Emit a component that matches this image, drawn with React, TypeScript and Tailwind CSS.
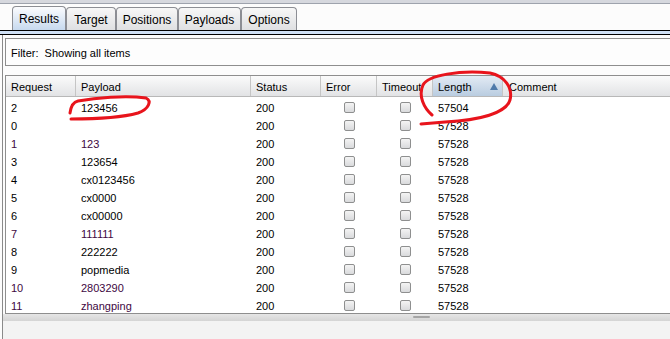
import React from "react";

const tabs = [
  { label: "Results", w: "w-[54px]", active: true },
  { label: "Target", w: "w-[50px]" },
  { label: "Positions", w: "w-[62px]" },
  { label: "Payloads", w: "w-[63px]" },
  { label: "Options", w: "w-[56px]" },
];

const rows: { req: string; payload: string; len: string; visited?: boolean }[] = [
  { req: "2", payload: "123456", len: "57504" },
  { req: "0", payload: "", len: "57528" },
  { req: "1", payload: "123", len: "57528", visited: true },
  { req: "3", payload: "123654", len: "57528" },
  { req: "4", payload: "cx0123456", len: "57528" },
  { req: "5", payload: "cx0000", len: "57528" },
  { req: "6", payload: "cx00000", len: "57528" },
  { req: "7", payload: "111111", len: "57528", visited: true },
  { req: "8", payload: "222222", len: "57528" },
  { req: "9", payload: "popmedia", len: "57528" },
  { req: "10", payload: "2803290", len: "57528", visited: true },
  { req: "11", payload: "zhangping", len: "57528", visited: true },
];

function Checkbox() {
  return (
    <div className="h-[11px] w-[11px] rounded-[2px] border border-[#8e8f8f] bg-gradient-to-b from-[#f4f4f4] to-[#d9dadc]" />
  );
}

function HeaderCell({ children, w, active }: { children?: React.ReactNode; w: string; active?: boolean }) {
  return (
    <div
      className={`${w} flex h-full shrink-0 items-center border-r border-[#c5c5c5] pl-[5px] pt-[2px] ${
        active ? "bg-gradient-to-b from-[#e3ebf4] to-[#b9cce0]" : ""
      }`}
    >
      {children}
    </div>
  );
}

export default function App() {
  return (
    <div className="relative h-[339px] w-[670px] overflow-hidden bg-[#fcfcfc] font-['Liberation_Sans',Arial,sans-serif] text-[11px] text-black">
      {/* top strip */}
      <div className="h-[4px] border-b border-[#9ea3ad] bg-[#d6d8de]" />

      {/* tabs */}
      <div className="flex h-[26px] items-end pl-[12px]">
        {tabs.map((t) => (
          <div
            key={t.label}
            className={`${t.w} flex items-center justify-center rounded-t-[4px] border border-b-0 border-[#8c8e94] pt-[1px] text-[12px] ${
              t.active
                ? "h-[24px] bg-gradient-to-b from-[#fbfcfe] to-[#c7d9ee]"
                : "h-[23px] bg-gradient-to-b from-[#f7f7f7] to-[#dfe0e2]"
            }`}
          >
            {t.label}
          </div>
        ))}
      </div>
      <div className="h-[5px] border-y border-black bg-[#cfe0f5]" />

      {/* main area */}
      <div className="ml-[2px] flex h-[304px] flex-col border-l border-[#8a8a8a]">
        <div className="pl-[2px] pt-[3px]">
          {/* filter bar */}
          <div className="flex h-[28px] items-center border border-r-0 border-[#8e8e8e] bg-[#fdfdfd] pl-[5px] pt-[2px]">
            Filter:&nbsp; Showing all items
          </div>

          {/* table */}
          <div className="mt-[9px] border border-r-0 border-[#8e8e8e] bg-white">
            <div className="flex h-[21px] border-b border-[#b8b8b8] bg-gradient-to-b from-[#fbfbfb] to-[#e2e3e5]">
              <HeaderCell w="w-[70px]">Request</HeaderCell>
              <HeaderCell w="w-[175px]">Payload</HeaderCell>
              <HeaderCell w="w-[70px]">Status</HeaderCell>
              <HeaderCell w="w-[56px]">Error</HeaderCell>
              <HeaderCell w="w-[56px]">Timeout</HeaderCell>
              <HeaderCell w="w-[70px]" active>
                <span className="flex-1">Length</span>
                <svg width="8" height="7" viewBox="0 0 8 7" className="mb-[2px] mr-[4px]">
                  <path d="M4 0 L8 7 L0 7 Z" fill="#4f7aaa" />
                </svg>
              </HeaderCell>
              <div className="flex h-full flex-1 items-center pl-[6px] pt-[2px]">Comment</div>
            </div>
            {rows.map((r) => (
              <div key={r.req} className="flex h-[18px] items-center">
                <div className={`w-[70px] shrink-0 pl-[5px] pt-[4px] ${r.visited ? "text-[#3e0842]" : ""}`}>{r.req}</div>
                <div className={`w-[175px] shrink-0 pl-[5px] pt-[4px] ${r.visited ? "text-[#3e0842]" : ""}`}>{r.payload}</div>
                <div className="w-[70px] shrink-0 pl-[5px] pt-[4px]">200</div>
                <div className="flex w-[56px] shrink-0 justify-center pt-[2px]">
                  <Checkbox />
                </div>
                <div className="flex w-[56px] shrink-0 justify-center pt-[2px]">
                  <Checkbox />
                </div>
                <div className="w-[70px] shrink-0 pl-[5px] pt-[4px]">{r.len}</div>
                <div className="flex-1" />
              </div>
            ))}
          </div>
        </div>

        {/* splitter */}
        <div className="flex h-[7px] justify-center bg-gradient-to-b from-[#e6e6e6] to-[#d4d4d4]">
          <div className="ml-[170px] mt-[2px] h-[2px] w-[17px] rounded-full bg-[#a5a5a5]" />
        </div>
        <div className="flex-1 bg-[#f3f3f3]" />
      </div>

      {/* red hand-drawn annotations */}
      <svg className="pointer-events-none absolute left-0 top-0" width="670" height="339">
        <path
          d="M70 113 C 71 106 73 102 78 101 C 95 98 125 95 146 98 C 152 101 149 109 138 113 C 120 118 95 119 71 119"
          fill="none"
          stroke="#e8141c"
          strokeWidth="3"
          strokeLinecap="round"
        />
        <path
          d="M432 115 C 424 108 418 96 423 85 C 428 75 460 70 490 73 C 505 76 513 88 510 100 C 506 113 480 120 445 122 L 421 124"
          fill="none"
          stroke="#e8141c"
          strokeWidth="3"
          strokeLinecap="round"
        />
      </svg>
    </div>
  );
}
